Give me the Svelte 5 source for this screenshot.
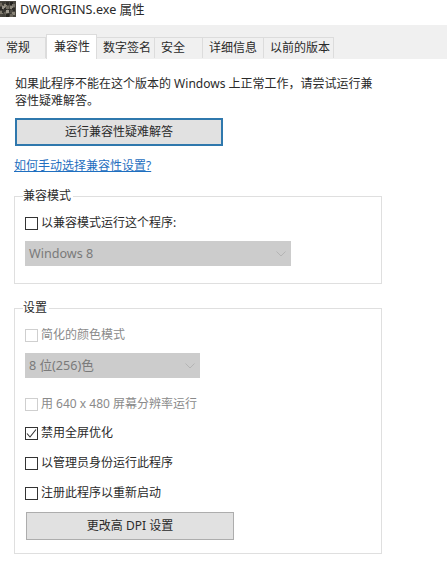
<script>
  const tabs = [
    { label: '常规', w: 46 },
    { label: '兼容性', w: 51, active: true },
    { label: '数字签名', w: 58 },
    { label: '安全', w: 48 },
    { label: '详细信息', w: 61 },
    { label: '以前的版本', w: 70 }
  ];
  const iconCells = [
    [0,2,'#6d675c'],[2,1,'#3c3a34'],[4,3,'#8b8678'],[6,1,'#2e2c28'],[8,4,'#55524a'],[10,1,'#23221f'],[12,3,'#77736a'],[0,6,'#2b2a26'],
    [2,5,'#99948a'],[4,7,'#2f2e2a'],[6,5,'#6f6b60'],[8,8,'#33312c'],[10,5,'#8d887c'],[12,7,'#2c2b27'],[0,10,'#7f7a6e'],[2,9,'#35332e'],
    [4,11,'#5f5c53'],[6,9,'#a09b90'],[8,12,'#3a3833'],[10,9,'#4f4c45'],[12,11,'#8a8578'],[2,13,'#44423b'],[6,13,'#26251f'],[10,13,'#6a665c']
  ];
</script>

<main class="window">
  <header class="title">
    <svg class="icon" width="16" height="16" viewBox="0 0 16 16" aria-hidden="true">
      <rect width="16" height="16" fill="#4a4740" />
      {#each iconCells as c}
        <rect x={c[0]} y={c[1]} width="3" height="3" fill={c[2]} />
      {/each}
    </svg>
    <span>DWORIGINS.exe 属性</span>
  </header>

  <nav class="tabs">
    {#each tabs as t}
      <div class="tab" class:active={t.active} style="width: {t.w}px">{t.label}</div>
    {/each}
  </nav>

  <section class="panel">
    <p class="intro">如果此程序不能在这个版本的 Windows 上正常工作，请尝试运行兼容性疑难解答。</p>
    <button class="btn primary">运行兼容性疑难解答</button>
    <a class="link" href="#help">如何手动选择兼容性设置?</a>

    <fieldset class="group first">
      <legend>兼容模式</legend>
      <label class="check"><span class="box"></span>以兼容模式运行这个程序:</label>
      <div class="select wide">
        <span>Windows 8</span>
        <svg width="10" height="6" viewBox="0 0 10 6"><path d="M0.5 0.5 L5 5 L9.5 0.5" fill="none" stroke="#b4b4b4" /></svg>
      </div>
    </fieldset>

    <fieldset class="group second">
      <legend>设置</legend>
      <label class="check disabled"><span class="box"></span>简化的颜色模式</label>
      <div class="select narrow">
        <span>8 位(256)色</span>
        <svg width="10" height="6" viewBox="0 0 10 6"><path d="M0.5 0.5 L5 5 L9.5 0.5" fill="none" stroke="#b4b4b4" /></svg>
      </div>
      <label class="check disabled res"><span class="box"></span>用 640 x 480 屏幕分辨率运行</label>
      <label class="check row first-row"><span class="box">
        <svg width="11" height="11" viewBox="0 0 11 11"><path d="M1 5.5 L4 9 L10 1.5" fill="none" stroke="#333" stroke-width="1.1" /></svg>
      </span>禁用全屏优化</label>
      <label class="check row"><span class="box"></span>以管理员身份运行此程序</label>
      <label class="check row"><span class="box"></span>注册此程序以重新启动</label>
      <button class="btn dpi">更改高 DPI 设置</button>
    </fieldset>
  </section>
</main>

<style>
  :global(body) {
    margin: 0;
    background: #fff;
  }
  .window {
    width: 447px;
    height: 561px;
    overflow: hidden;
    background: #fff;
    color: #2a2a2a;
    font-family: "Noto Sans", "Noto Sans CJK SC", sans-serif;
    font-size: 12px;
    line-height: 16px;
  }
  .title {
    height: 25px;
    display: flex;
    align-items: flex-start;
    gap: 4px;
    font-size: 12.6px;
    background: #fff;
  }
  .title .icon {
    margin-top: 1px;
  }
  .title span {
    line-height: 20px;
  }
  .tabs {
    height: 34px;
    box-sizing: border-box;
    display: flex;
    align-items: flex-end;
    background: #f0f0f0;
  }
  .tab {
    box-sizing: border-box;
    height: 21px;
    margin-bottom: 1px;
    padding-top: 2px;
    padding-left: 6px;
    background: #f0f0f0;
    border: 1px solid #dcdcdc;
    border-bottom: 0;
    border-left: 0;
    white-space: nowrap;
  }
  .tab.active {
    height: 25px;
    margin-bottom: 0;
    padding-top: 4px;
    padding-left: 7px;
    background: #fff;
    border-left: 1px solid #dcdcdc;
  }
  .panel {
    padding: 16px 0 0 15px;
  }
  .intro {
    margin: 0;
    width: 362px;
    line-height: 17px;
  }
  .btn {
    display: block;
    box-sizing: border-box;
    font: inherit;
    color: inherit;
    background: #e1e1e1;
    padding: 0;
  }
  .primary {
    width: 208px;
    height: 28px;
    margin-top: 9px;
    border: 2px solid #2f78ad;
    outline: none;
  }
  .link {
    display: block;
    width: max-content;
    margin: 12px 0 0 -1px;
    color: #1f6fc0;
    text-decoration: underline;
    line-height: 16px;
  }
  .group {
    box-sizing: border-box;
    width: 368px;
    margin: 0 0 0 -1px;
    padding: 0 0 0 10px;
    border: 1px solid #dfdfdf;
  }
  .group legend {
    padding: 0 2px 0 0;
    margin-left: -2px;
    line-height: 16px;
  }
  .first {
    margin-top: 14px;
    height: 96px;
  }
  .second {
    margin-top: 16px;
    height: 254px;
  }
  .check {
    display: flex;
    align-items: center;
    height: 16px;
    gap: 3px;
  }
  .first .check {
    margin-top: 11px;
  }
  .second .check:first-of-type {
    margin-top: 11px;
  }
  .box {
    box-sizing: border-box;
    width: 13px;
    height: 13px;
    border: 1px solid #333;
    background: #fff;
    display: flex;
    align-items: center;
    justify-content: center;
    flex: none;
  }
  .disabled {
    color: #8a8a8a;
  }
  .disabled .box {
    border-color: #cfcfcf;
  }
  .select {
    box-sizing: border-box;
    height: 25px;
    margin-top: 10px;
    background: #cccccc;
    color: #7a7a7a;
    font-size: 12.6px;
    display: flex;
    align-items: center;
    justify-content: space-between;
    padding: 0 5px 0 4px;
  }
  .wide {
    width: 266px;
  }
  .narrow {
    width: 175px;
  }
  .res {
    margin-top: 18px;
  }
  .row {
    margin-top: 14px;
  }
  .first-row {
    margin-top: 13px;
  }
  .dpi {
    width: 208px;
    height: 28px;
    margin: 11px 0 0 1px;
    border: 1px solid #adadad;
  }
</style>
